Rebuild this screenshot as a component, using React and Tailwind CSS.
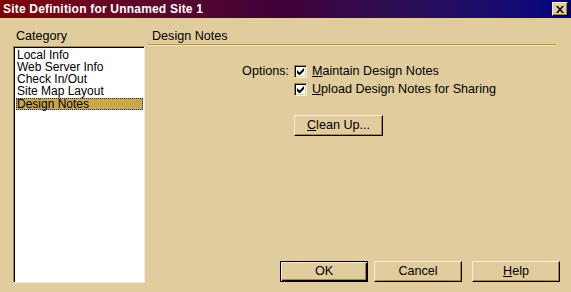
import React from "react";

const categories = [
  "Local Info",
  "Web Server Info",
  "Check In/Out",
  "Site Map Layout",
  "Design Notes",
];

function Check() {
  return (
    <span className="w-[13px] h-[13px] bg-white border-t border-l border-t-[#a8883c] border-l-[#a8883c] border-b border-r border-b-[#f8f0dc] border-r-[#f8f0dc] shadow-[inset_1px_1px_0_#000,inset_-1px_-1px_0_#e0cc9c] flex items-center justify-center">
      <svg width="7" height="7" viewBox="0 0 7 7">
        <path d="M0 2v3l2 2h1l4-4V0L2.5 4.5z" fill="#000" />
      </svg>
    </span>
  );
}

function Button({ children, isDefault, className }) {
  return (
    <button
      className={
        "h-[21px] flex items-center justify-center text-[12.6px] text-black bg-[#e0cc9c] " +
        (isDefault
          ? "border border-black shadow-[inset_1px_1px_0_#f8f0dc,inset_-1px_-1px_0_#000,inset_-2px_-2px_0_#a8883c] "
          : "border-t border-l border-t-[#f8f0dc] border-l-[#f8f0dc] border-b border-r border-b-black border-r-black shadow-[inset_-1px_-1px_0_#a8883c] ") +
        className
      }
    >
      {children}
    </button>
  );
}

export default function App() {
  return (
    <div
      className="w-[571px] h-[292px] bg-[#e0cc9c] flex flex-col overflow-hidden text-black"
      style={{ fontFamily: '"Liberation Sans", Arial, sans-serif' }}
    >
      <div className="h-[18px] flex items-center justify-between pl-[3px] pr-[3px] bg-gradient-to-r from-[#800000] via-[#40003a] to-[#000080]">
        <span className="text-white font-bold text-[12px] tracking-[0.2px] leading-none">
          Site Definition for Unnamed Site 1
        </span>
        <span className="w-[16px] h-[14px] bg-[#e0cc9c] border-t border-l border-t-[#f8f0dc] border-l-[#f8f0dc] border-b border-r border-b-black border-r-black shadow-[inset_-1px_-1px_0_#a8883c] flex items-center justify-center">
          <svg width="8" height="7" viewBox="0 0 8 7">
            <path d="M0 0h2l2 2.5L6 0h2L5 3.5 8 7H6L4 4.5 2 7H0l3-3.5z" fill="#000" />
          </svg>
        </span>
      </div>

      <div className="flex flex-1 pt-[11px]">
        <div className="w-[148px] pl-[13px] flex flex-col">
          <div className="pl-[3px] text-[12.6px] leading-[14px] h-[17px]">Category</div>
          <div className="w-[132px] h-[237px] bg-white border-t border-l border-t-[#a8883c] border-l-[#a8883c] border-b border-r border-b-[#f8f0dc] border-r-[#f8f0dc] shadow-[inset_1px_1px_0_#000] pt-[2px] pl-[2px] pr-[1px]">
            {categories.map((c) => (
              <div
                key={c}
                className={
                  "text-[12px] leading-[12px] h-[12px] pl-[1px] " +
                  (c === "Design Notes"
                    ? "bg-[#c8a848] outline outline-1 outline-dotted outline-[#1c2c8c] -outline-offset-1 mt-[1px]"
                    : "")
                }
              >
                {c}
              </div>
            ))}
          </div>
        </div>

        <div className="flex-1 flex flex-col pr-[15px]">
          <div className="pl-[4px] text-[12.6px] leading-[14px] h-[15px]">Design Notes</div>
          <div className="h-[1px] bg-[#c09838]" />
          <div className="h-[1px] bg-[#f0e4c4]" />

          <div className="flex pt-[18px]">
            <div className="w-[146px] text-right text-[12.6px] leading-[14px] pr-[5px]">Options:</div>
            <div className="flex flex-col">
              <div className="flex items-center gap-[5px] h-[14px]">
                <Check />
                <span className="text-[12.6px]">
                  <u>M</u>aintain Design Notes
                </span>
              </div>
              <div className="flex items-center gap-[5px] h-[14px] mt-[4px]">
                <Check />
                <span className="text-[12.6px]">
                  <u>U</u>pload Design Notes for Sharing
                </span>
              </div>
              <Button className="w-[89px] mt-[19px]">
                <span>
                  <u>C</u>lean Up...
                </span>
              </Button>
            </div>
          </div>

          <div className="flex-1" />
          <div className="flex justify-end gap-[6px] pb-[10px] mr-[-4px]">
            <Button isDefault className="w-[88px]">OK</Button>
            <Button className="w-[88px]">Cancel</Button>
            <Button className="w-[88px] ml-[4px]">
              <span>
                <u>H</u>elp
              </span>
            </Button>
          </div>
        </div>
      </div>
    </div>
  );
}
